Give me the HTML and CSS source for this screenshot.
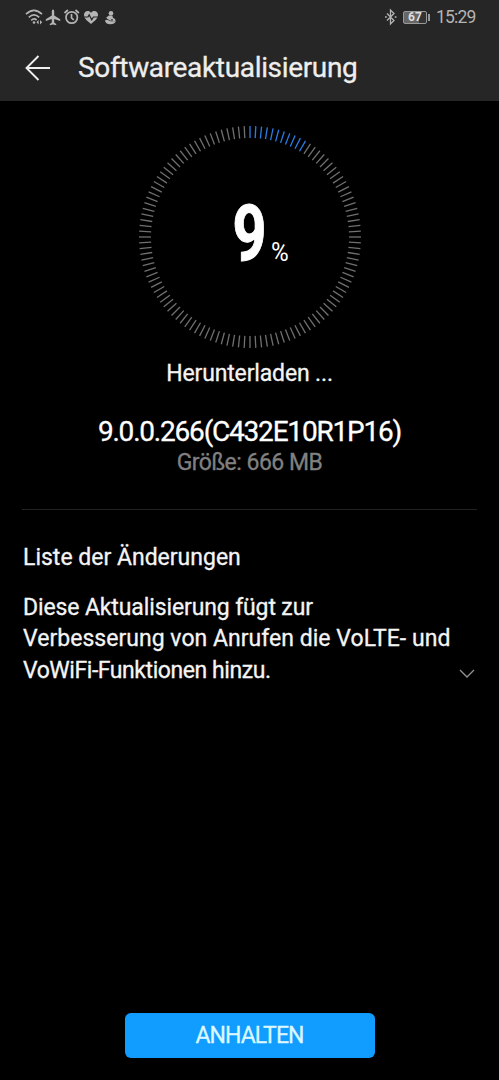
FILE: index.html
```html
<!DOCTYPE html>
<html lang="de">
<head>
<meta charset="utf-8">
<title>Softwareaktualisierung</title>
<link rel="stylesheet" href="styles.css">
</head>
<body>
<div class="screen">
  <header class="top">
    <div class="status">
      <svg class="status-icons" width="96" height="20" viewBox="0 0 96 20" fill="none" stroke="#b4b4b4" stroke-width="1.7">
        <path d="M1 7.200Q9-.6 17 7.200M3.800 10.400Q9 5.200 14.200 10.400M6.200 13.300Q9 10.800 11.600 13"/>
        <circle cx="9" cy="15.500" r="1.300" fill="#b4b4b4" stroke="none"/>
        <path d="M13.600 13v4.600l-2.200-2.300zM15 13v4.600l2.200-2.300z" fill="#b4b4b4" stroke="none"/>
        <path d="M28 2.500q1.200 0 1.200 2v4l6 3.800v1.800l-6-2v3.500l2 1.500v1.200l-3.200-.8-3.200.8v-1.200l2-1.500v-3.500l-6 2v-1.800l6-3.800v-4q0-2 1.200-2z" fill="#b4b4b4" stroke="none"/>
        <circle cx="46.700" cy="10.500" r="5.700"/>
        <path d="M46.500 7v3.800l2.300 2.200M39.500 6l3.400-3M53.900 6l-3.400-3"/>
        <path d="M66 17C61 13 59 10.800 59 8c0-4.500 5.300-5 7-2 1.700-3 7-2.500 7 2 0 2.800-2 5-7 9z" fill="#b4b4b4" stroke="none"/>
        <path d="M59 10h4l1.200-2.300 2.500 5 1.800-2.700h5" stroke="#262626" stroke-width="1.200"/>
        <g fill="#b4b4b4" stroke="none">
          <circle cx="86" cy="6.200" r="2.300"/>
          <path d="M84 8.500h3.300l.8 2.500q3 1 2.300 3.500h-3l-5-2.500-1.200-1.500z"/>
          <path d="M80 13.500q1.500-1.200 3.500-.3 3 1.800 7.400 1-1.200 3-5.600 3-5 0-5.300-3.700z"/>
        </g>
        <circle cx="87" cy="12.800" r=".9" fill="#262626" stroke="none"/>
      </svg>
      <div class="status-right">
        <svg width="12" height="18" viewBox="0 0 12 18" fill="none" stroke="#b4b4b4" stroke-width="1.300">
          <path d="M2 5.500l7 7-3.500 3.500V2L9 5.500l-7 7"/>
          <path d="M0 9h1.800M9.700 9h1.800"/>
        </svg>
        <span class="battery">67</span><span class="battery-tip"></span>
        <span class="clock">15:29</span>
      </div>
    </div>
    <div class="titlebar">
      <svg width="26" height="26" viewBox="0 0 26 26" fill="none" stroke="#eee" stroke-width="1.900">
        <path d="M25 13H1.500M13.500 1L1.500 13l12 12"/>
      </svg>
      <h1 class="title">Softwareaktualisierung</h1>
    </div>
  </header>

  <main class="content">
    <div class="dial">
      <svg class="ticks" width="222" height="222" viewBox="0 0 222 222"></svg>
      <span class="num">9</span><span class="pct">%</span>
    </div>
    <p class="state">Herunterladen ...</p>
    <p class="version">9.0.0.266(C432E10R1P16)</p>
    <p class="size">Größe: 666 MB</p>
    <section class="changes">
      <h2 class="changes-title">Liste der Änderungen</h2>
      <div class="changes-body">
        <p class="desc"><span class="l1">Diese Aktualisierung fügt zur</span><span class="l2">Verbesserung von Anrufen die VoLTE- und</span><span class="l3">VoWiFi-Funktionen hinzu.</span></p>
        <svg class="chevron" width="16" height="10" viewBox="0 0 16 10" fill="none" stroke="#909090" stroke-width="1.400"><path d="M1 1l7 7 7-7"/></svg>
      </div>
    </section>
  </main>
  <footer class="footer"><button class="stop">ANHALTEN</button></footer>
</div>
<script src="dial.js"></script>
</body>
</html>
```
FILE: dial.js
```js
const ticks = document.querySelector('.ticks');
let marks = '';
for (let i = 0; i < 120; i++) {
  const color = i < 11 ? '#2a7de6' : '#707070';
  marks += `<path d="M111 0V12" stroke="${color}" stroke-width="1.3" transform="rotate(${i * 3} 111 111)"/>`;
}
ticks.innerHTML = marks;
```
FILE: styles.css
```css
* { box-sizing: border-box; }
body { margin: 0; background: #000; color: #f4f4f4; font-family: Roboto, "Liberation Sans", sans-serif; }
h1, h2, p { margin: 0; font-weight: 400; white-space: nowrap; -webkit-text-stroke: .3px currentColor; }
svg { display: block; flex: none; }
.screen { width: 499px; height: 1080px; display: flex; flex-direction: column; overflow: hidden; }
.top { height: 101px; background: #262626; flex: none; }
.status { height: 34px; display: flex; justify-content: space-between; padding: 0 24px 0 25px; }
.status-icons { margin-top: 7px; }
.status-right { display: flex; align-items: center; color: #b4b4b4; }
.battery { width: 24px; height: 13px; margin-left: 6px; border: 1px solid #999; border-radius: 2px; background: linear-gradient(90deg, #666 66%, #333 66%); color: #ddd; font-size: 12px; line-height: 11px; font-weight: 700; text-align: center; }
.battery-tip { width: 2px; height: 7px; background: #999; margin-left: 1px; }
.clock { width: 39px; margin-left: 6px; font-size: 17.500px; letter-spacing: -.8px; white-space: nowrap; }
.titlebar { display: flex; align-items: center; height: 67px; padding: 0 0 0 25px; }
.title { margin-left: 27px; padding-top: 1px; font-size: 28px; line-height: 34px; letter-spacing: -.34px; color: #eee; }
.content { flex: 1; }
.dial { width: 222px; height: 222px; margin: 25px auto 0; display: grid; }
.ticks { grid-area: 1 / 1; }
.num { grid-area: 1 / 1; align-self: start; margin: 62px 0 0 88px; width: 45px; font-size: 78px; line-height: 92px; font-weight: 700; color: #fff; -webkit-text-stroke: 1px #fff; transform: scaleX(.76); }
.pct { grid-area: 1 / 1; align-self: start; margin: 109px 0 0 132px; width: 20px; font-size: 26px; line-height: 34px; color: #fff; transform: scaleX(.93); transform-origin: left; }
.state, .version, .size { text-align: center; }
.state { margin-top: 12px; font-size: 23px; line-height: 28px; letter-spacing: -.15px; }
.version { margin-top: 26px; font-size: 28px; line-height: 36px; letter-spacing: -1.200px; color: #fff; }
.size { font-size: 23px; line-height: 26px; letter-spacing: -.52px; color: #808080; }
.changes { margin: 33px 22px 0; border-top: 1px solid #222; padding: 34px 0 0 1px; }
.changes-title { font-size: 23px; line-height: 28px; }
.changes-body { display: flex; justify-content: space-between; align-items: flex-end; margin-top: 20px; }
.desc { font-size: 23px; line-height: 31.400px; width: 430px; }
.desc span { display: block; }
.l1 { letter-spacing: -.12px; }
.l2 { letter-spacing: .03px; }
.l3 { letter-spacing: -.44px; }
.chevron { margin: 0 2.500px 7px 0; }
.footer { height: 67px; flex: none; display: flex; justify-content: center; align-items: flex-start; }
.stop { width: 250px; height: 45px; border: 0; border-radius: 6px; background: #109dff; color: #dcf8ff; font: 400 23px/46px Roboto, sans-serif; letter-spacing: -.95px; padding: 0; -webkit-text-stroke: .3px currentColor; }
```
